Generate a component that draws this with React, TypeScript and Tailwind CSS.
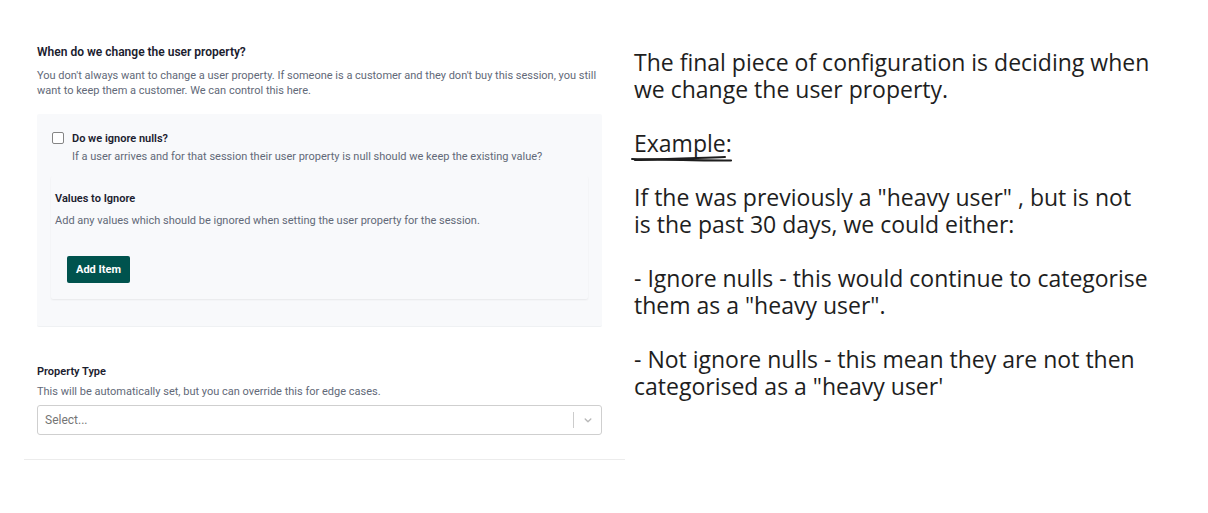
import { useState } from "react"

const notes = [
  "The final piece of configuration is deciding when\nwe change the user property.",
  "Example:",
  "If the was previously a \"heavy user\" , but is not\nis the past 30 days, we could either:",
  "- Ignore nulls - this would continue to categorise\nthem as a \"heavy user\".",
  "- Not ignore nulls - this mean they are not then\ncategorised as a \"heavy user'",
]

function IgnoreRules() {
  const [ignoreNulls, setIgnoreNulls] = useState(false)

  return (
    <div className="mt-4 rounded-xs border-b border-[#eff1f3] bg-[#f8f9fb] px-3.5 pt-4 pb-[27px]">
      <div className="flex items-start gap-2">
        <input
          id="ignore-nulls"
          type="checkbox"
          checked={ignoreNulls}
          onChange={(e) => setIgnoreNulls(e.target.checked)}
          className="mt-0.5 ml-px h-3 w-3 shrink-0 appearance-none rounded-xs border border-[#858585] bg-white checked:bg-[#00534e]"
        />
        <div>
          <label htmlFor="ignore-nulls" className="block leading-[18px] font-semibold text-[#1a202e]">
            Do we ignore nulls?
          </label>
          <p className="leading-[18px]">
            If a user arrives and for that session their user property is null should we keep the existing value?
          </p>
        </div>
      </div>

      {/* Values list */}
      <div className="mt-2.5 rounded-xs px-1 pt-3.5 pb-4 shadow-[0_1px_2px_rgba(0,0,0,0.07)]">
        <h3 className="leading-[18px] font-semibold text-[#1a202e]">Values to Ignore</h3>
        <p className="mt-1 leading-[18px]">
          Add any values which should be ignored when setting the user property for the session.
        </p>
        <button
          type="button"
          className="mt-[26px] ml-3 block rounded-xs bg-[#00534e] px-[9px] py-[5px] leading-[17px] font-bold text-white"
        >
          Add Item
        </button>
      </div>
    </div>
  )
}

function PropertyType() {
  return (
    <div className="mt-9">
      <label htmlFor="property-type" className="block leading-[18px] font-semibold text-[#1a202e]">
        Property Type
      </label>
      <p className="mt-0.5 leading-[18px]">
        This will be automatically set, but you can override this for edge cases.
      </p>
      <div className="relative mt-1 rounded-[3px] border border-[#cfcfcf] bg-white">
        <select
          id="property-type"
          defaultValue=""
          className="block h-7 w-full appearance-none bg-transparent px-[7px] text-xs text-[#757575] outline-none"
        >
          <option value="">Select...</option>
          <option value="string">String</option>
          <option value="number">Number</option>
        </select>
        <div className="pointer-events-none absolute inset-y-0 right-0 flex items-center gap-2 pr-[7px]">
          <span className="h-4 w-px bg-[#ccc]" />
          <svg viewBox="0 0 20 20" className="h-3 w-3 fill-[#b8b8b8]" aria-hidden="true">
            <path d="M4.516 7.548c0.436-0.446 1.043-0.481 1.576 0l3.908 3.747 3.908-3.747c0.533-0.481 1.141-0.446 1.574 0 0.436 0.445 0.408 1.197 0 1.615-0.406 0.418-4.695 4.502-4.695 4.502-0.217 0.223-0.502 0.335-0.787 0.335s-0.57-0.112-0.789-0.335c0 0-4.287-4.084-4.695-4.502s-0.436-1.17 0-1.615z" />
          </svg>
        </div>
      </div>
    </div>
  )
}

// Hand drawn double line below the "Example" heading
function Scribble() {
  return (
    <svg
      viewBox="0 0 102 8"
      className="pointer-events-none absolute top-6 -left-[3px] h-2 w-[102px] fill-none stroke-[#1e1e1e]"
      strokeLinecap="round"
      aria-hidden="true"
    >
      <path d="M1 5 C25 6 60 4 94 3" strokeWidth="2" />
      <path d="M4 6 C35 5 65 6.5 100 6.5" strokeWidth="2.2" />
    </svg>
  )
}

export default function App() {
  return (
    <main className="grid min-h-screen grid-cols-[601fr_583fr] bg-white pt-11 pl-6 font-['Roboto','Inter',sans-serif] text-[11px] text-[#626978]">
      <section className="self-start border-b border-[#ececec] pr-[23px] pb-6 pl-[13px]">
        <h2 className="text-xs leading-4 font-semibold text-[#1a202e]">When do we change the user property?</h2>
        <p className="mt-2 leading-[15px]">
          You don't always want to change a user property. If someone is a customer and they don't buy this session, you still
          want to keep them a customer. We can control this here.
        </p>
        <IgnoreRules />
        <PropertyType />
      </section>

      <aside className="space-y-[27px] pt-[5px] pl-[9px] font-['Excalifont','Open_Sans',sans-serif] text-[23px] leading-[27px] font-medium text-[#1e1e1e]">
        {notes.map((note) => (
          <p key={note} className="relative whitespace-pre">
            {note}
            {note === "Example:" && <Scribble />}
          </p>
        ))}
      </aside>
    </main>
  )
}
